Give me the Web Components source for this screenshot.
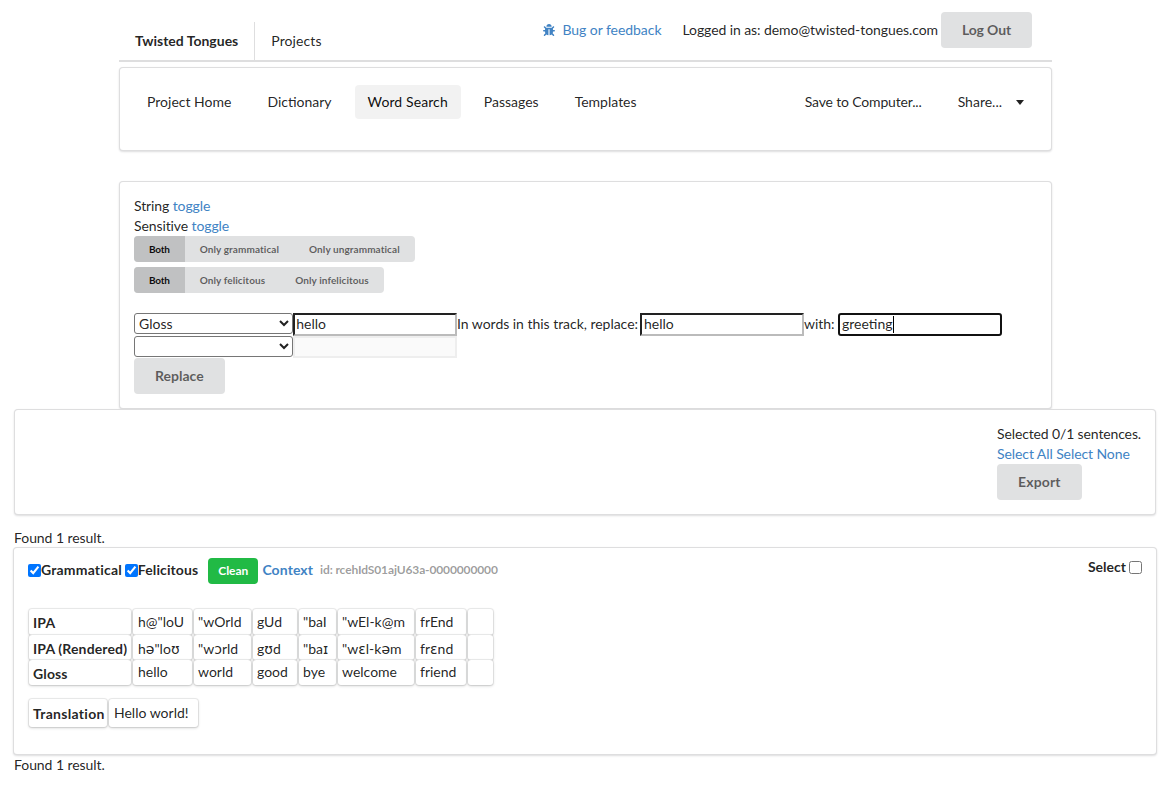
<!DOCTYPE html>
<html>
<head>
<meta charset="utf-8">
<title>Twisted Tongues</title>
<style>
	html, body { margin: 0; padding: 0; background: #fff; }
	body {
		font-family: Lato, "Noto Sans", sans-serif;
		font-size: 14px;
		line-height: 20px;
		color: rgba(0,0,0,.87);
	}
</style>
</head>
<body>
<tt-app></tt-app>
<script>
(function() {
	function define(name, html) {
		let template = document.createElement("template");
		template.innerHTML = html;
		customElements.define(name, class extends HTMLElement {
			constructor() {
				super();
				this.attachShadow({mode: "open"}).appendChild(template.content.cloneNode(true));
			}
		});
	}

	define("tt-button", `
		<style>
			:host { display: inline-block; }
			div {
				background: #e0e1e2;
				color: rgba(0,0,0,.6);
				font-weight: 700;
				line-height: 14px;
				padding: 11px 21px;
				border-radius: 4px;
				white-space: nowrap;
			}
		</style>
		<div><slot></slot></div>
	`);

	define("tt-segment", `
		<style>
			:host {
				display: block;
				box-sizing: border-box;
				background: #fff;
				border: 1px solid rgba(34,36,38,.15);
				border-radius: 4px;
				box-shadow: 0 1px 2px 0 rgba(34,36,38,.15);
				padding: 14px;
			}
		</style>
		<slot></slot>
	`);

	define("tt-toggle-group", `
		<style>
			:host {
				display: flex;
				width: max-content;
				background: #e0e1e2;
				border-radius: 4px;
				overflow: hidden;
				font-size: 10px;
				font-weight: 700;
				line-height: 10px;
				color: rgba(0,0,0,.6);
			}
		</style>
		<slot></slot>
	`);

	define("tt-toggle", `
		<style>
			:host { display: block; padding: 7.8px 15px; white-space: nowrap; letter-spacing: .08px; }
			:host([active]) { background: #c0c1c2; color: rgba(0,0,0,.95); letter-spacing: -.2px; }
		</style>
		<slot></slot>
	`);

	define("tt-header", `
		<style>
			:host {
				display: flex;
				justify-content: space-between;
				height: 62px;
				box-sizing: border-box;
				border-bottom: 2px solid rgba(34,36,38,.15);
			}
			.left { display: flex; padding-top: 22px; }
			.brand {
				font-weight: 700;
				padding: 9px 16px 0;
				border-right: 1px solid rgba(34,36,38,.15);
			}
			.projects { padding: 9px 16px 0; letter-spacing: .1px; }
			.right { display: flex; align-items: center; height: 36px; margin-top: 12px; padding-right: 20px; }
			a { color: #4183c4; text-decoration: none; display: flex; align-items: center; letter-spacing: -.05px; }
			svg { width: 12px; height: 12px; margin-right: 7px; fill: #4183c4; }
			.who { margin: 0 3px 0 21px; letter-spacing: -.08px; }
			tt-button { letter-spacing: -.14px; }
		</style>
		<div class="left">
			<div class="brand">Twisted Tongues</div>
			<div class="projects">Projects</div>
		</div>
		<div class="right">
			<a href="#"><svg viewBox="0 0 512 512"><path d="M511.988 288.9c-.478 17.43-15.217 31.1-32.653 31.1H424v16c0 21.864-4.882 42.584-13.6 61.145l60.228 60.228c12.496 12.497 12.496 32.758 0 45.255-12.498 12.497-32.759 12.496-45.256 0l-54.736-54.736C345.886 467.965 314.351 480 280 480V236c0-6.627-5.373-12-12-12h-24c-6.627 0-12 5.373-12 12v244c-34.351 0-65.886-12.035-90.636-32.108l-54.736 54.736c-12.496 12.497-32.758 12.497-45.255 0-12.497-12.497-12.497-32.758 0-45.255l60.228-60.228C92.882 378.584 88 357.864 88 336v-16H32.666C15.23 320 .491 306.33.013 288.9-.484 270.816 14.028 256 32 256h56v-58.745l-46.628-46.628c-12.496-12.497-12.496-32.758 0-45.255 12.498-12.497 32.758-12.497 45.256 0L141.255 160h229.489l54.627-54.627c12.498-12.497 32.758-12.497 45.256 0 12.496 12.497 12.496 32.758 0 45.255L424 197.255V256h56c17.972 0 32.484 14.816 31.988 32.9zM257 0c-61.856 0-112 50.144-112 112h224C369 50.144 318.856 0 257 0z"/></svg>Bug or feedback</a>
			<span class="who">Logged in as: demo@twisted-tongues.com</span>
			<tt-button>Log Out</tt-button>
		</div>
	`);

	define("tt-nav", `
		<style>
			:host { display: block; margin-top: 5px; }
			tt-segment { height: 84px; padding: 17px 14px 0; }
			.menu { display: flex; align-items: center; }
			.item { padding: 7px 13px; line-height: 20px; margin-right: 10px; border-radius: 4px; white-space: nowrap; }
			.active { background: rgba(0,0,0,.05); color: rgba(0,0,0,.95); letter-spacing: .1px; }
			.push { margin-left: auto; letter-spacing: -.16px; }
			.share { display: flex; align-items: center; margin-right: 0; padding-right: 0; }
			.caret { width: 0; height: 0; margin: 0 13px 0 14px; border: 4.5px solid transparent; border-top: 5px solid rgba(0,0,0,.87); border-bottom: 0; }
		</style>
		<tt-segment>
			<div class="menu">
				<div class="item">Project Home</div>
				<div class="item">Dictionary</div>
				<div class="item active">Word Search</div>
				<div class="item">Passages</div>
				<div class="item">Templates</div>
				<div class="item push">Save to Computer...</div>
				<div class="item share">Share...<span class="caret"></span></div>
			</div>
		</tt-segment>
	`);

	define("tt-search", `
		<style>
			:host { display: block; margin-top: 30px; }
			a { color: #4183c4; text-decoration: none; }
			.tight { letter-spacing: -.1px; }
			tt-toggle-group + tt-toggle-group { margin-top: 5.6px; }
			form { margin: 20.4px 0 0; }
			.row { display: flex; align-items: flex-start; white-space: pre; }
			select {
				box-sizing: border-box;
				width: 158.5px;
				height: 20.5px;
				margin: 0 .8px 0 0;
				font: 14px Lato, sans-serif;
				color: rgba(0,0,0,.87);
				background: #fff;
				border: 1px solid #767676;
				border-radius: 3px;
			}
			input {
				box-sizing: border-box;
				width: 163.7px;
				height: 23px;
				margin: 0;
				padding: 0 1px 2px;
				font: 14px Lato, sans-serif;
				color: rgba(0,0,0,.87);
				background: #fff;
				border: 2px solid;
				border-color: #222 #bbb #bbb #222;
				outline: 0;
			}
			input.wide { width: 164px; padding-left: 2px; }
			input[disabled] { background: #fafafa; border-color: #eee; height: 22px; }
			input.focus { border-color: #111; border-radius: 3px; }
			.field { position: relative; display: block; }
			.cursor { position: absolute; left: 55px; top: 3px; width: 1px; height: 17px; background: #000; }
			span.text { line-height: 22px; letter-spacing: -.03px; }
			.replace { width: 183px; }
			.with { width: 34px; }
			tt-button { display: block; width: max-content; }
		</style>
		<tt-segment>
			<div class="tight">String <a href="#">toggle</a></div>
			<div class="tight">Sensitive <a href="#">toggle</a></div>
			<tt-toggle-group>
				<tt-toggle active>Both</tt-toggle>
				<tt-toggle>Only grammatical</tt-toggle>
				<tt-toggle>Only ungrammatical</tt-toggle>
			</tt-toggle-group>
			<tt-toggle-group>
				<tt-toggle active>Both</tt-toggle>
				<tt-toggle>Only felicitous</tt-toggle>
				<tt-toggle>Only infelicitous</tt-toggle>
			</tt-toggle-group>
			<form onsubmit="return false">
				<div class="row">
					<select><option>Gloss</option></select>
					<input value="hello">
					<span class="text replace">In words in this track, replace:</span>
					<input class="wide" value="hello">
					<span class="text with">with:</span>
					<span class="field"><input class="wide focus" value="greeting"><span class="cursor"></span></span>
				</div>
				<div class="row">
					<select><option></option></select>
					<input disabled>
				</div>
			</form>
			<tt-button>Replace</tt-button>
		</tt-segment>
	`);

	define("tt-export", `
		<style>
			:host { display: block; margin: 0 14px; }
			.side { width: max-content; margin-left: auto; }
			a { color: #4183c4; text-decoration: none; }
			.count { letter-spacing: -.13px; }
			.links { letter-spacing: -.09px; }
			tt-button { display: block; width: max-content; letter-spacing: .15px; }
		</style>
		<tt-segment>
			<div class="side">
				<div class="count">Selected 0/1 sentences.</div>
				<div class="links"><a href="#">Select All</a> <a href="#">Select None</a></div>
				<tt-button>Export</tt-button>
			</div>
		</tt-segment>
	`);

	define("tt-cell", `
		<style>
			:host {
				display: block;
				box-sizing: border-box;
				padding: 3px 4px;
				background: #fff;
				border-radius: 3px;
				box-shadow: 0 1px 3px 0 rgba(34,36,38,.22), 0 0 0 1px rgba(34,36,38,.08);
				white-space: nowrap;
				height: 100%;
			}
			:host([head]) { font-weight: 700; padding-top: 4px; letter-spacing: .14px; }
			:host([low]) { padding-top: 4px; }
			:host([high]) { padding-top: 2px; }
			:host([wide]) { padding-left: 5px; }
		</style>
		<slot></slot>
	`);

	define("tt-gloss-grid", `
		<style>
			:host {
				display: grid;
				width: max-content;
				margin-left: 1px;
				column-gap: 2px;
				grid-template-rows: 26px 25px 25px;
				grid-template-columns: 102px 59px 57px 44px 37px 76px 50px 25px;
			}
		</style>
		<slot></slot>
	`);

	define("tt-translation", `
		<style>
			:host {
				display: grid;
				grid-template-columns: 78px 89px;
				width: max-content;
				margin: 14px 0 0 1px;
				column-gap: 2px;
				height: 26px;
			}
		</style>
		<slot></slot>
	`);

	define("tt-result", `
		<style>
			:host { display: block; margin: 0 13px; }
			tt-segment { height: 208px; padding: 10px 14px 0; }
			.top { display: flex; align-items: center; height: 26px; font-weight: 700; }
			.top > * { margin-bottom: 2px; }
			input { width: 13px; height: 13px; margin: 0; accent-color: #0075ff; }
			.gap { margin-left: 3px; }
			.gram { letter-spacing: .18px; }
			.feli { letter-spacing: .1px; }
			.top > .clean {
				background: #21ba45;
				color: #fff;
				font-size: 12px;
				line-height: 26px;
				padding: 0 10px;
				border-radius: 4px;
				margin: 0 4px 0 10px;
			}
			a { color: #4183c4; text-decoration: none; letter-spacing: .1px; }
			.id { color: rgba(0,0,0,.4); font-size: 12px; margin-left: 7px; letter-spacing: -.13px; }
			.select { margin-left: auto; margin-top: -6px; display: flex; align-items: center; }
			.select input { margin-left: 3px; margin-bottom: 0; }
			.tables { margin-top: 25px; }
			.ipa { font-family: "DejaVu Sans", sans-serif; }
		</style>
		<tt-segment>
			<div class="top">
				<input type="checkbox" checked><span class="gram">Grammatical</span>
				<input class="gap" type="checkbox" checked><span class="feli">Felicitous</span>
				<span class="clean">Clean</span>
				<a href="#">Context</a>
				<span class="id">id: rcehIdS01ajU63a-0000000000</span>
				<span class="select">Select <input type="checkbox"></span>
			</div>
			<div class="tables">
				<tt-gloss-grid>
					<tt-cell head>IPA</tt-cell><tt-cell wide>h@"loU</tt-cell><tt-cell>"wOrld</tt-cell><tt-cell>gUd</tt-cell><tt-cell>"baI</tt-cell><tt-cell>"wEl-k@m</tt-cell><tt-cell>frEnd</tt-cell><tt-cell></tt-cell>
					<tt-cell head>IPA (Rendered)</tt-cell><tt-cell wide low>h<span class="ipa">ə</span>"lo<span class="ipa">ʊ</span></tt-cell><tt-cell low>"w<span class="ipa">ɔ</span>rld</tt-cell><tt-cell low>g<span class="ipa">ʊ</span>d</tt-cell><tt-cell low>"ba<span class="ipa">ɪ</span></tt-cell><tt-cell low>"w<span class="ipa">ɛ</span>l-k<span class="ipa">ə</span>m</tt-cell><tt-cell low>fr<span class="ipa">ɛ</span>nd</tt-cell><tt-cell></tt-cell>
					<tt-cell head>Gloss</tt-cell><tt-cell wide high>hello</tt-cell><tt-cell high>world</tt-cell><tt-cell high>good</tt-cell><tt-cell high>bye</tt-cell><tt-cell high>welcome</tt-cell><tt-cell high>friend</tt-cell><tt-cell></tt-cell>
				</tt-gloss-grid>
				<tt-translation>
					<tt-cell head style="padding-top:5px;letter-spacing:.3px">Translation</tt-cell><tt-cell wide low>Hello world!</tt-cell>
				</tt-translation>
			</div>
		</tt-segment>
	`);

	define("tt-app", `
		<style>
			:host { display: block; }
			.top { margin: 0 118px 0 119px; }
			.found { margin: 13px 14px 0; height: 19px; line-height: 20px; letter-spacing: -.06px; }
			.found.last { margin-top: 0; }
		</style>
		<div class="top">
			<tt-header></tt-header>
			<tt-nav></tt-nav>
			<tt-search></tt-search>
		</div>
		<tt-export></tt-export>
		<div class="found">Found 1 result.</div>
		<tt-result></tt-result>
		<div class="found last">Found 1 result.</div>
	`);
})();
</script>
</body>
</html>
